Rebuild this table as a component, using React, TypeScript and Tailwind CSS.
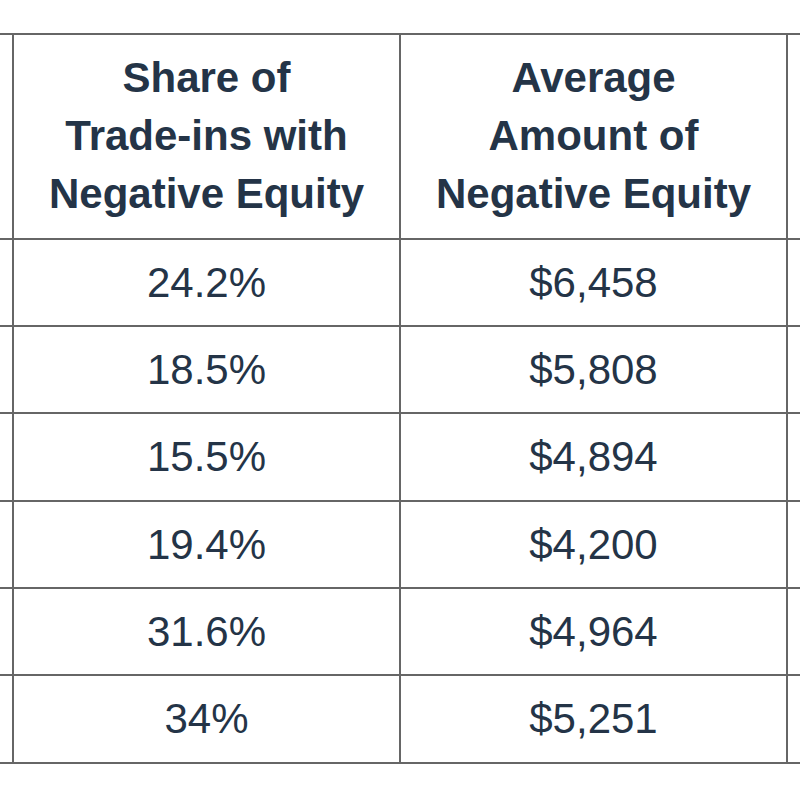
const rows = [
  { share: "24.2%", amount: "$6,458", h: "h-[87px]" },
  { share: "18.5%", amount: "$5,808", h: "h-[87px]" },
  { share: "15.5%", amount: "$4,894", h: "h-[88px]" },
  { share: "19.4%", amount: "$4,200", h: "h-[87px]" },
  { share: "31.6%", amount: "$4,964", h: "h-[87px]" },
  { share: "34%", amount: "$5,251", h: "h-[88px]" },
];

export default function App() {
  return (
    <div className="h-[800px] w-[800px] overflow-hidden bg-white pt-[33px] font-['Liberation_Sans',Arial,sans-serif] text-[#243447]">
      <div className="grid grid-cols-[14px_387px_387px_12px] border-t-2 border-[#666]">
        {/* header */}
        <div className="h-[205px] border-r-2 border-b-2 border-[#666]" />
        <div className="flex h-[205px] items-center justify-center border-r-2 border-b-2 border-[#666] pb-[2px] text-center text-[42px] font-bold leading-[58px]">
          <span>
            Share of
            <br />
            Trade-ins with
            <br />
            Negative Equity
          </span>
        </div>
        <div className="flex h-[205px] items-center justify-center border-r-2 border-b-2 border-[#666] pb-[2px] text-center text-[42px] font-bold leading-[58px]">
          <span>
            Average
            <br />
            Amount of
            <br />
            Negative Equity
          </span>
        </div>
        <div className="h-[205px] border-b-2 border-[#666]" />

        {rows.map((r) => (
          <div key={r.share} className="contents">
            <div className={`${r.h} border-r-2 border-b-2 border-[#666]`} />
            <div className={`${r.h} flex items-center justify-center border-r-2 border-b-2 border-[#666] text-[42px] leading-none`}>
              {r.share}
            </div>
            <div className={`${r.h} flex items-center justify-center border-r-2 border-b-2 border-[#666] text-[42px] leading-none`}>
              {r.amount}
            </div>
            <div className={`${r.h} border-b-2 border-[#666]`} />
          </div>
        ))}
      </div>
    </div>
  );
}
